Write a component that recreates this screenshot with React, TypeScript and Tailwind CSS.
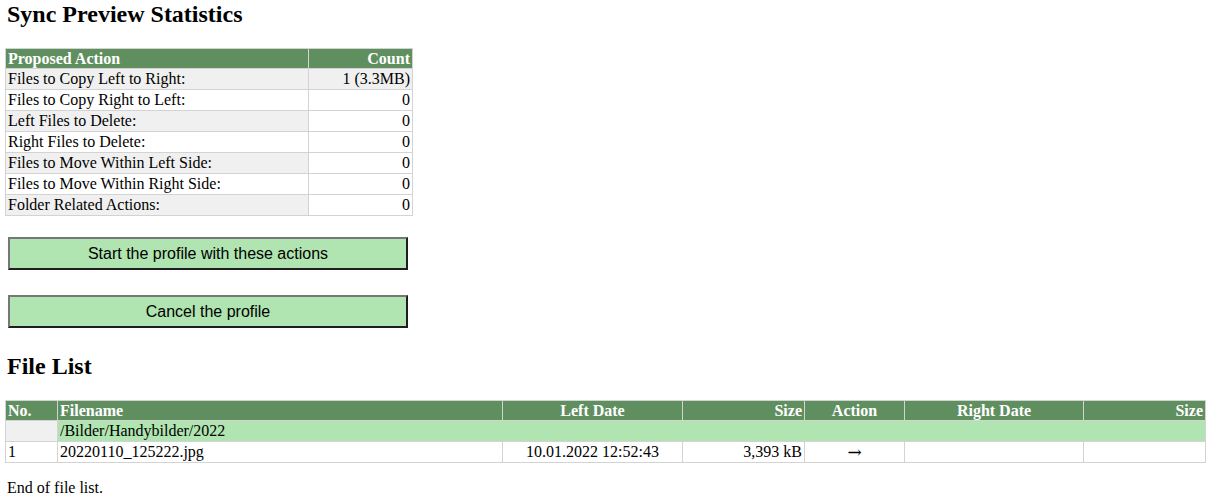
import React from 'react';

const statRows: { label: string; value: string; shadeValue?: boolean }[] = [
  { label: 'Files to Copy Left to Right:', value: '1 (3.3MB)', shadeValue: true },
  { label: 'Files to Copy Right to Left:', value: '0' },
  { label: 'Left Files to Delete:', value: '0' },
  { label: 'Right Files to Delete:', value: '0' },
  { label: 'Files to Move Within Left Side:', value: '0' },
  { label: 'Files to Move Within Right Side:', value: '0' },
  { label: 'Folder Related Actions:', value: '0' },
];

const cell = 'border border-[#d3d3d3] px-[2px] py-0 whitespace-nowrap';
const head = 'border border-[#d3d3d3] px-[2px] py-0 bg-[#5f8f5f] text-white font-bold whitespace-nowrap';

const ActionButton = ({ children }: { children: React.ReactNode }) => (
  <button
    className="block w-[400px] h-[33px] ml-[3px] bg-[#b0e4b0] text-black text-[16px] border-2 border-t-[#777777] border-l-[#777777] border-b-[#1e1e1e] border-r-[#1e1e1e] font-['Liberation_Sans',Arial,sans-serif]"
  >
    {children}
  </button>
);

export default function App() {
  return (
    <div className="bg-white min-h-[501px] px-[5px] text-black text-[16px] leading-[18px] font-['Liberation_Serif','Times_New_Roman',serif]">
      <h2 className="m-0 pl-[2px] text-[24px] leading-[28px] font-bold">Sync Preview Statistics</h2>

      <table className="mt-5 w-[407px] table-fixed border-collapse">
        <colgroup>
          <col className="w-[303px]" />
          <col className="w-[104px]" />
        </colgroup>
        <thead>
          <tr className="h-[20px]">
            <th className={`${head} text-left`}>Proposed Action</th>
            <th className={`${head} text-right`}>Count</th>
          </tr>
        </thead>
        <tbody>
          {statRows.map((row, i) => (
            <tr key={row.label} className="h-[21px]">
              <td className={`${cell} text-left ${i % 2 === 0 ? 'bg-[#f0f0f0]' : 'bg-white'}`}>{row.label}</td>
              <td className={`${cell} text-right ${row.shadeValue ? 'bg-[#f0f0f0]' : 'bg-white'}`}>{row.value}</td>
            </tr>
          ))}
        </tbody>
      </table>

      <div className="mt-[21px] flex flex-col gap-[25px]">
        <ActionButton>Start the profile with these actions</ActionButton>
        <ActionButton>Cancel the profile</ActionButton>
      </div>

      <h2 className="mt-[24px] mb-0 pl-[2px] text-[24px] leading-[28px] font-bold">File List</h2>

      <table className="mt-5 w-[1200px] table-fixed border-collapse">
        <colgroup>
          <col className="w-[52px]" />
          <col className="w-[445px]" />
          <col className="w-[180px]" />
          <col className="w-[122px]" />
          <col className="w-[100px]" />
          <col className="w-[179px]" />
          <col className="w-[122px]" />
        </colgroup>
        <thead>
          <tr className="h-[20px]">
            <th className={`${head} text-left`}>No.</th>
            <th className={`${head} text-left`}>Filename</th>
            <th className={`${head} text-center`}>Left Date</th>
            <th className={`${head} text-right`}>Size</th>
            <th className={`${head} text-center`}>Action</th>
            <th className={`${head} text-center`}>Right Date</th>
            <th className={`${head} text-right`}>Size</th>
          </tr>
        </thead>
        <tbody>
          <tr className="h-[21px]">
            <td className={`${cell} bg-[#f0f0f0]`}></td>
            <td colSpan={6} className={`${cell} bg-[#b0e4b0] text-left`}>/Bilder/Handybilder/2022</td>
          </tr>
          <tr className="h-[21px]">
            <td className={`${cell} text-left`}>1</td>
            <td className={`${cell} text-left`}>20220110_125222.jpg</td>
            <td className={`${cell} text-center`}>10.01.2022 12:52:43</td>
            <td className={`${cell} text-right`}>3,393 kB</td>
            <td className={`${cell} text-center text-[17px] font-['DejaVu_Serif',serif]`}>→</td>
            <td className={cell}></td>
            <td className={cell}></td>
          </tr>
        </tbody>
      </table>

      <p className="mt-4 pl-[2px]">End of file list.</p>
    </div>
  );
}
